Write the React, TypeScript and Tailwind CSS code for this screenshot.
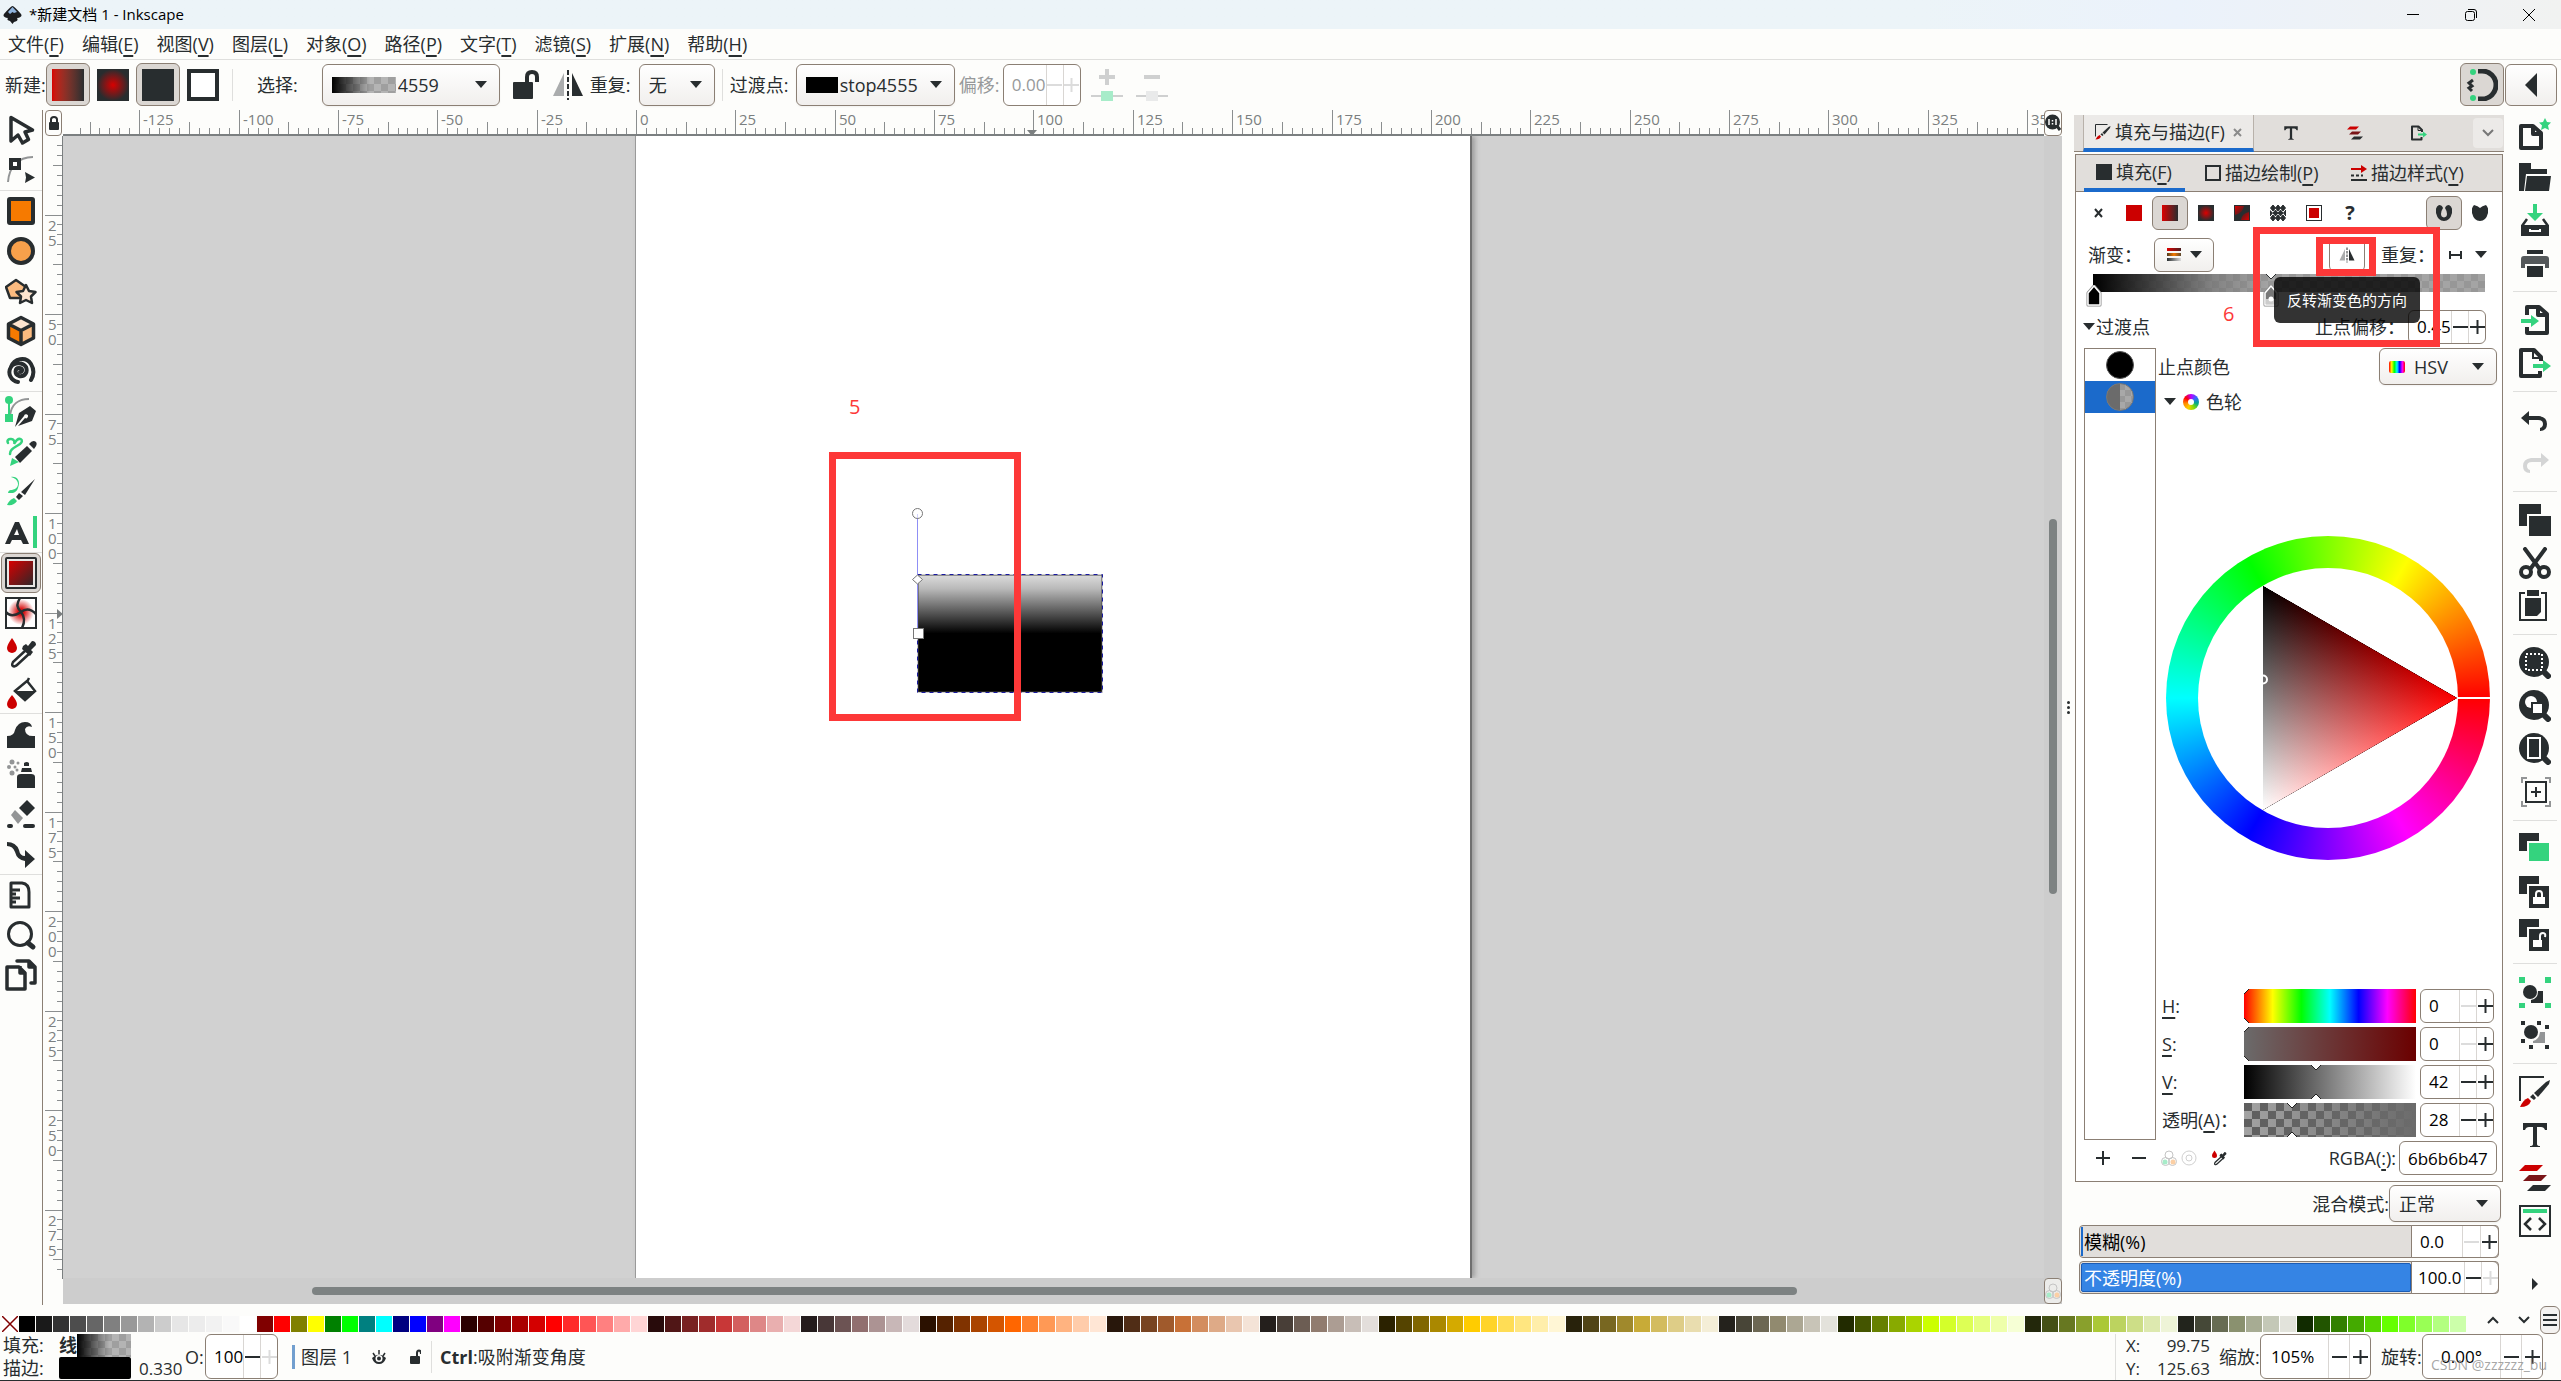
import type { ReactNode } from "react";

const INK = "#282d2f";
const GREEN = "#34d37e";
const RED = "#cc0000";

const PALETTE = (
  "000000 1a1a1a 333333 4d4d4d 666666 808080 999999 b3b3b3 cccccc e6e6e6 ececec f2f2f2 f9f9f9 ffffff " +
  "800000 ff0000 808000 ffff00 008000 00ff00 008080 00ffff 000080 0000ff 800080 ff00ff " +
  "2b0000 550000 800000 aa0000 d40000 ff0000 ff2a2a ff5555 ff8080 ffaaaa ffd5d5 " +
  "280b0b 501616 782121 a02c2c c83737 d35f5f de8787 e9afaf f4d7d7 " +
  "241c1c 483737 6c5353 916f6f ac9393 c8b7b7 e3dbdb " +
  "2b1100 552200 803300 aa4400 d45500 ff6600 ff7f2a ff9955 ffb380 ffccaa ffe6d5 " +
  "28170b 502d16 784421 a05a2c c87137 d38d5f deaa87 e9c6af f4e3d7 " +
  "241f1c 483e37 6c5d53 917c6f ac9d93 c8beb7 e3dedb " +
  "2b2200 554400 806600 aa8800 d4aa00 ffcc00 ffd42a ffdd55 ffe680 ffeeaa fff6d5 " +
  "28220b 504416 786721 a0892c c8ab37 d3bc5f decd87 e9ddaf f4eed7 " +
  "24221c 484537 6c6753 918a6f aca793 c8c4b7 e3e2db " +
  "222b00 445500 668000 88aa00 aad400 ccff00 d4ff2a ddff55 e5ff80 eeffaa f6ffd5 " +
  "23280b 445016 677821 89a02c abc837 bcd35f cdde87 dde9af eef4d7 " +
  "22241c 454837 676c53 8a916f a7ac93 c4c8b7 e2e3db " +
  "112b00 225500 338000 44aa00 55d400 66ff00 7fff2a 99ff55 b3ff80 ccffaa"
).split(" ");

const MENUS = [
  ["文件", "F"],
  ["编辑", "E"],
  ["视图", "V"],
  ["图层", "L"],
  ["对象", "O"],
  ["路径", "P"],
  ["文字", "T"],
  ["滤镜", "S"],
  ["扩展", "N"],
  ["帮助", "H"],
];

function Key({ children }: { children: string }) {
  return (
    <>
      (<span className="underline decoration-2 underline-offset-4">{children}</span>)
    </>
  );
}

function Svg({ size = 32, children }: { size?: number; children: ReactNode }) {
  return (
    <svg width={size} height={size} viewBox={`0 0 ${size} ${size}`} fill="none" className="shrink-0" aria-hidden="true">
      {children}
    </svg>
  );
}

function Arrow() {
  return (
    <svg width="12" height="8" viewBox="0 0 12 8" className="pointer-events-none shrink-0" aria-hidden="true">
      <path d="M0 0H12L6 7Z" fill={INK} />
    </svg>
  );
}

function Spin({ label, value, className, cell = "w-[17px]", noMinus, noPlus, disabled }: {
  label: string;
  value: string;
  className: string;
  cell?: string;
  noMinus?: boolean;
  noPlus?: boolean;
  disabled?: boolean;
}) {
  return (
    <div className={`flex shrink-0 overflow-hidden rounded-md border border-[#8b7f74] bg-white ${className}`}>
      <input
        aria-label={label}
        defaultValue={value}
        disabled={disabled}
        className={`w-0 min-w-0 flex-1 bg-transparent text-[17px] outline-none ${disabled ? "text-[#97999a]" : "text-black"}`}
      />
      <button aria-label={`${label} -`} className={`flex items-center justify-center border-l border-[#d9d6d3] ${cell}`}>
        <svg width="15" height="14"><path d="M0 7H15" stroke={noMinus || disabled ? "#dcdcdc" : INK} strokeWidth="2" /></svg>
      </button>
      <button aria-label={`${label} +`} className={`flex items-center justify-center border-l border-[#d9d6d3] ${cell}`}>
        <svg width="15" height="14"><path d="M0 7H15M7.500 0V14" stroke={noPlus || disabled ? "#dcdcdc" : INK} strokeWidth="2" /></svg>
      </button>
    </div>
  );
}

function Drop({ label, value, className, children }: { label: string; value: string; className: string; children?: ReactNode }) {
  return (
    <div className={`flex shrink-0 items-center rounded-md border border-[#8b7f74] bg-linear-to-b from-white to-[#f1efed] pr-3 pl-[9px] shadow-xs ${className}`}>
      {children}
      <select aria-label={label} className="min-w-0 flex-1 appearance-none bg-transparent outline-none">
        <option>{value}</option>
      </select>
      <Arrow />
    </div>
  );
}

/* ---------- icons ---------- */

function Flip({ size = 32 }: { size?: number }) {
  return (
    <svg width={size} height={size} viewBox="0 0 32 32" aria-hidden="true">
      <path d="M12 4V27H1Z" fill="#aaacad" />
      <path d="M20 4V27H31Z" fill={INK} />
      <path d="M16 1V31" stroke={INK} strokeWidth="2" strokeDasharray="5 2" />
    </svg>
  );
}

function PadLock({ open }: { open?: boolean }) {
  return (
    <svg width="12" height="16" viewBox="0 0 12 16" fill="none" aria-hidden="true">
      <rect x="1" y="7" width="10" height="8" rx="1" fill={INK} />
      <path d={open ? "M8 8V4Q8 1.500 10 1.500T12 5" : "M3 8V4.500Q3 2 6 2T9 4.500V8"} stroke={INK} strokeWidth="2" />
    </svg>
  );
}

function Dropper({ size = 32 }: { size?: number }) {
  return (
    <svg width={size} height={size} viewBox="0 0 32 32" fill="none" aria-hidden="true">
      <path d="M7 1Q12 8 12 11A5 5 0 0 1 2 11Q2 8 7 1Z" fill={RED} />
      <path d="M21 13L8 25Q6 29 9 29.500Q11 29 12 28L25 16" stroke={INK} strokeWidth="2.500" />
      <path d="M18 9L21 7L23 9L27 4Q31 4 31 8L26 13L28 15L25 19L17 12Z" fill={INK} />
    </svg>
  );
}

function Layers({ size = 32 }: { size?: number }) {
  return (
    <svg width={size} height={size} viewBox="0 0 32 32" aria-hidden="true">
      <path d="M6 3H24L18 9H0Z" fill={RED} />
      <path d="M10 13H28L22 19H4Z" fill="#7a1518" />
      <path d="M14 23H32L26 29H8Z" fill={INK} />
    </svg>
  );
}

function FillStroke({ size = 32 }: { size?: number }) {
  return (
    <svg width={size} height={size} viewBox="0 0 32 32" fill="none" aria-hidden="true">
      <path d="M1 25V1H25" stroke={INK} strokeWidth="2" />
      <path d="M31 4L30 8L19 21L15 17L27 6Z" fill={INK} />
      <path d="M14 18L17 22L15 24L11 21Z" fill={INK} />
      <path d="M9 22L12 25Q10 31 1 31Q4 24 9 22Z" fill={RED} />
    </svg>
  );
}

function Serif({ size = 32 }: { size?: number }) {
  return (
    <svg width={size} height={size} viewBox="0 0 32 32" aria-hidden="true">
      <path d="M4 4H28V11H26Q25 8 22 8H18V25Q18 27 21 27V28H11V27Q14 27 14 25V8H10Q7 8 6 11H4Z" fill={INK} />
    </svg>
  );
}

function Export({ size = 32 }: { size?: number }) {
  return (
    <svg width={size} height={size} viewBox="0 0 32 32" fill="none" aria-hidden="true">
      <path d="M21 24V29H2V3H15L22 10V14" stroke={INK} strokeWidth="4" strokeLinejoin="round" />
      <path d="M14 2V11H23" stroke={INK} strokeWidth="2" />
      <path d="M14 17H24V13L32 19L24 25V21H14Z" fill={GREEN} />
    </svg>
  );
}

const TOOLS: { name: string; sep?: boolean; active?: boolean; icon: ReactNode }[] = [
  { name: "选择", icon: <path d="M6 3.500L27.500 16L20 18L23.500 25.500L17.500 29L13 21L6 27Z" stroke={INK} strokeWidth="3.500" strokeLinejoin="round" /> },
  {
    name: "节点",
    icon: (
      <>
        <path d="M28 3C13 3 4 13 3 28" stroke="#939596" strokeWidth="2" />
        <rect x="6" y="6" width="8" height="8" stroke={INK} strokeWidth="4" fill="#fff" />
        <path d="M20 18L30 23.500L20 29L21 23.500Z" fill={INK} />
      </>
    ),
  },
  { name: "矩形", sep: true, icon: <rect x="4" y="4" width="24" height="24" rx="1" fill="#f67a00" stroke={INK} strokeWidth="4" /> },
  { name: "椭圆", icon: <circle cx="16" cy="16" r="12" fill="#f7a04b" stroke={INK} strokeWidth="4" /> },
  {
    name: "星形",
    icon: (
      <>
        <path d="M11 5L21 12L18 23H5L1 12Z" fill="#fbbb80" stroke={INK} strokeWidth="2.500" strokeLinejoin="round" />
        <path d="M21 10L24 16L30.500 17L26 21.500L27 28L21 25L15 28L16 21.500L11.500 17L18 16Z" fill="#fde4cf" stroke={INK} strokeWidth="2.500" strokeLinejoin="round" />
      </>
    ),
  },
  {
    name: "3D 盒子",
    icon: (
      <>
        <path d="M16 2L28 9L16 15L4 9Z" fill="#fde4cf" />
        <path d="M4 9L16 15V30L4 23Z" fill="#f67a00" />
        <path d="M28 9L16 15V30L28 23Z" fill="#fbbb80" />
        <path d="M16 2.500L28.500 9V23L16 29.500L3.500 23V9ZM3.500 9L16 15.500L28.500 9M16 15.500V29.500" stroke={INK} strokeWidth="3.500" strokeLinejoin="round" />
      </>
    ),
  },
  { name: "螺旋", icon: <path d="M15 17C18 17 18 13 14 13C10 13 9 19 14 21C20 22 23 17 21 12C18 7 9 7 6 12C2 18 6 26 13 27M6 12C9 3 21 1 26 9C29 14 29 20 26 25" stroke={INK} strokeWidth="4" strokeLinecap="round" /> },
  {
    name: "钢笔",
    sep: true,
    icon: (
      <>
        <path d="M5 20C6 8 14 3 24 3" stroke="#939596" strokeWidth="2" />
        <path d="M4 4V22" stroke={GREEN} strokeWidth="2" />
        <circle cx="4" cy="4" r="4" fill={GREEN} />
        <rect y="18" width="8" height="8" fill={GREEN} />
        <path d="M10 31L14 17L25 10L31 15L27 25L13 30L20 22A2 2 0 1 0 19 20Z" fill={INK} />
      </>
    ),
  },
  {
    name: "铅笔",
    icon: (
      <>
        <path d="M3 7C0 1 12 2 9 8C14 -1 20 4 15 8C9 12 5 13 5 18" stroke={GREEN} strokeWidth="2.500" strokeLinecap="round" />
        <path d="M7 22L14 26L5 30Z" fill={GREEN} />
        <path d="M10 21L22 10L27 15L15 27Z" fill={INK} />
        <path d="M24 8Q28 3 31 6Q33 9 29 13Z" fill={INK} />
      </>
    ),
  },
  {
    name: "书法笔",
    icon: (
      <>
        <path d="M6 1C14 3 15 10 10 13C5 15 4 13 3 17C6 17 11 18 13 12C16 5 12 0 6 1Z" fill={GREEN} />
        <path d="M9 22L12 25Q9 30 2 29Q4 24 9 22Z" fill={GREEN} />
        <path d="M30 3L20 19L16 16ZM14 17L18 20L14 24L11 21Z" fill={INK} />
      </>
    ),
  },
  {
    name: "文本",
    icon: (
      <>
        <path d="M10 6H14L24 28H18L16 24H7L5 28H0ZM9 19H14L12 13Z" fill={INK} fillRule="evenodd" />
        <path d="M30 0V32" stroke={GREEN} strokeWidth="4" />
      </>
    ),
  },
  {
    name: "渐变",
    sep: true,
    active: true,
    icon: (
      <>
        <linearGradient id="tool-grad" x2="1" y2="1"><stop stopColor="#d80000" /><stop offset=".85" stopColor="#4a2022" /><stop offset="1" stopColor={INK} /></linearGradient>
        <rect x="1" y="1" width="30" height="30" rx="1" stroke={INK} strokeWidth="2" fill="#e9e7e5" />
        <rect x="4" y="4" width="24" height="24" fill="url(#tool-grad)" />
      </>
    ),
  },
  {
    name: "网格",
    icon: (
      <>
        <radialGradient id="tool-mesh"><stop stopColor="#d00000" /><stop offset=".25" stopColor="#d81515" /><stop offset="1" stopColor="#fff" /></radialGradient>
        <rect x="1" y="1" width="30" height="30" fill="#fff" stroke={INK} strokeWidth="2" />
        <circle cx="16" cy="15" r="13" fill="url(#tool-mesh)" />
        <path d="M15 1C11 8 12 11 16 15C20 20 20 25 17 31M1 15C5 20 10 19 16 15C21 11 26 12 31 17" stroke={INK} strokeWidth="2.500" />
      </>
    ),
  },
  { name: "吸管", icon: <Dropper /> },
  {
    name: "油漆桶",
    icon: (
      <>
        <path d="M7 18Q12 24 12 27A5 5 0 0 1 2 27Q2 24 7 18Z" fill={RED} />
        <path d="M10 14L22 4L30 14L20 23ZM22 5L24 1" stroke={INK} strokeWidth="2.500" />
        <path d="M11 14H30L20 24Z" fill={INK} />
      </>
    ),
  },
  { name: "微调", sep: true, icon: <path d="M2 18Q9 18 10 12Q13 4 20 4Q26 4 27 9Q22 7 20 11Q20 19 30 18V30H2Z" fill={INK} /> },
  {
    name: "喷涂",
    icon: (
      <>
        <path d="M12 19Q12 16 16 16H26Q30 16 30 19V30H12ZM17 10H26L27 14H16ZM19 5Q22 3 24 5V8H19Z" fill={INK} />
        <g fill="#939596"><circle cx="7" cy="4" r="2.500" /><circle cx="4" cy="9" r="2" /><circle cx="7" cy="15" r="2.500" /><circle cx="13" cy="5" r="1.500" /><circle cx="10" cy="9" r="1.500" /><circle cx="12" cy="12" r="1.500" /></g>
      </>
    ),
  },
  {
    name: "橡皮擦",
    icon: (
      <>
        <path d="M22 2L30 10L22 18L14 10Z" fill={INK} />
        <path d="M10 12L18 20L13 26L6 17Z" fill="#939596" />
        <path d="M4 28H6M20 28H28" stroke={INK} strokeWidth="4" strokeLinecap="round" />
      </>
    ),
  },
  { name: "连接器", icon: <path d="M2 4Q11 4 14 12Q15 18 20 18V12L30 21L20 30V23Q12 22 10 14Q8 8 2 8Z" fill={INK} /> },
  { name: "测量", sep: true, icon: <path d="M6 4H17Q24 5 24 13V28H6ZM6 11H15M6 15H11M6 19H15M6 23H11" stroke={INK} strokeWidth="3" strokeLinejoin="round" /> },
  {
    name: "缩放",
    icon: (
      <>
        <circle cx="15" cy="15" r="11.500" stroke={INK} strokeWidth="3" />
        <path d="M23 24L28 28" stroke={INK} strokeWidth="5" strokeLinecap="round" />
      </>
    ),
  },
  {
    name: "页面",
    icon: (
      <>
        <path d="M2 8H14L20 14V30H2ZM15 7V14H21" stroke={INK} strokeWidth="3.500" strokeLinejoin="round" />
        <path d="M12 2H24L30 8V24H26M24 2V8H30" stroke={INK} strokeWidth="3.500" strokeLinejoin="round" strokeLinecap="round" />
      </>
    ),
  },
];

const BACK_SQUARES = <path d="M0 0H20V8H8V18H0Z" fill={INK} />;

function Lens({ children }: { children: ReactNode }) {
  return (
    <>
      <circle cx="15" cy="15" r="15" fill={INK} />
      <path d="M24 24L29 29" stroke={INK} strokeWidth="6" strokeLinecap="round" />
      {children}
    </>
  );
}

const COMMANDS: { name: string; icon: ReactNode }[][] = [
  [
    {
      name: "新建",
      icon: (
        <>
          <path d="M2 8H14L22 15V30H2ZM14 8V16H22" stroke={INK} strokeWidth="4" strokeLinejoin="round" />
          <path d="M26 0L28 4L32 4.500L29 7.500L30 12L26 10L22 12L23 7.500L20 4.500L24 4Z" fill={GREEN} />
        </>
      ),
    },
    { name: "打开", icon: <path d="M0 2H12V8H28V13H7L5 30H0ZM8 15H32L30 30H6Z" fill={INK} /> },
    {
      name: "保存",
      icon: (
        <>
          <path d="M14 0H18V9H24L16 17L8 9H14Z" fill={GREEN} />
          <path d="M2 21H30V32H2Z" fill={INK} />
          <path d="M3 22L8 15M29 22L24 15" stroke={INK} strokeWidth="2.500" />
          <path d="M11 25V27H21V25" stroke="#fff" strokeWidth="2" />
        </>
      ),
    },
    {
      name: "打印",
      icon: (
        <>
          <path d="M8 3H24V7H8ZM8 19H24V30H8Z" fill={INK} />
          <path d="M5 9H27Q30 9 30 12V21H26V17H6V21H2V12Q2 9 5 9Z" fill="#54585a" />
        </>
      ),
    },
  ],
  [
    {
      name: "导入",
      icon: (
        <>
          <path d="M8 11V3H20L28 10V29H8V23M19 3V11H28" stroke={INK} strokeWidth="4" strokeLinejoin="round" />
          <path d="M2 15H12V11L20 17L12 23V19H2Z" fill={GREEN} />
        </>
      ),
    },
    { name: "导出", icon: <Export /> },
  ],
  [
    { name: "撤销", icon: <path d="M2 14L10 7V12H20Q28 13 28 20Q28 27 21 27V24Q24 23 24 20Q24 16 19 16H10V21Z" fill={INK} /> },
    { name: "重做", icon: <path d="M30 13L22 6V11H12Q4 12 4 19Q4 26 11 26V23Q8 22 8 19Q8 15 13 15H22V20Z" fill="#d4d5d5" /> },
  ],
  [
    { name: "复制", icon: <path d="M0 0H22V10H8V22H0ZM10 12H32V32H10Z" fill={INK} /> },
    {
      name: "剪切",
      icon: (
        <>
          <path d="M6 2L20 21M26 2L12 21" stroke={INK} strokeWidth="4" strokeLinecap="round" />
          <circle cx="7" cy="25" r="5" stroke={INK} strokeWidth="4" />
          <circle cx="25" cy="25" r="5" stroke={INK} strokeWidth="4" />
        </>
      ),
    },
    {
      name: "粘贴",
      icon: (
        <>
          <path d="M6 3H1V30H27V3H22" stroke={INK} strokeWidth="2" />
          <path d="M8 0H20V6H8ZM6 8H22V22L18 26H6Z" fill={INK} />
        </>
      ),
    },
  ],
  [
    { name: "缩放选区", icon: <Lens><rect x="7" y="7" width="16" height="16" stroke="#fff" strokeWidth="2" strokeDasharray="2 2" /></Lens> },
    { name: "缩放绘图", icon: <Lens><circle cx="12" cy="12" r="6" fill="#fff" /><rect x="13" y="13" width="11" height="11" fill="#fff" stroke={INK} strokeWidth="2" /></Lens> },
    { name: "缩放页面", icon: <Lens><rect x="9" y="5" width="12" height="20" stroke="#fff" strokeWidth="2" /></Lens> },
    {
      name: "居中页面",
      icon: (
        <>
          <path d="M3 7V2H8M26 2H31V7M31 25V30H26M8 30H3V25" stroke="#939596" strokeWidth="2" />
          <path d="M7 6H27V26H7ZM12 16H22M17 11V21" stroke={INK} strokeWidth="2" />
        </>
      ),
    },
  ],
  [
    { name: "再制", icon: <>{BACK_SQUARES}<path d="M10 10H30V28H10Z" fill={GREEN} /></> },
    {
      name: "克隆",
      icon: (
        <>
          {BACK_SQUARES}
          <path d="M10 10H30V32H10Z" fill={INK} />
          <path d="M14 21H26V28H14Z" fill="#fff" />
          <path d="M17 22V18Q17 15 20 15T23 18V22" stroke="#fff" strokeWidth="2" />
        </>
      ),
    },
    {
      name: "取消克隆",
      icon: (
        <>
          {BACK_SQUARES}
          <path d="M10 10H30V32H10Z" fill={INK} />
          <path d="M14 21H23V28H14Z" fill="#fff" />
          <path d="M21 22V17Q21 14 24 14T26 18" stroke="#fff" strokeWidth="2" />
        </>
      ),
    },
  ],
  [
    {
      name: "群组",
      icon: (
        <>
          <path d="M0 1H6V7H0ZM26 1H32V7H26ZM0 27H6V32H0ZM26 27H32V32H26Z" fill={GREEN} />
          <circle cx="11" cy="16" r="7" fill={INK} />
          <path d="M19 15H24V27H12V24Q19 23 19 15Z" fill={INK} />
        </>
      ),
    },
    {
      name: "取消群组",
      icon: (
        <>
          <path d="M2 2H6V6H2ZM18 2H22V6H18ZM26 6H30V10H26ZM2 20H6V24H2ZM10 26H14V30H10ZM26 26H30V30H26Z" fill={INK} />
          <path d="M21 13H26V24H14V22Q20 21 21 13Z" fill="#939596" />
          <circle cx="12" cy="13" r="7" fill={INK} />
        </>
      ),
    },
  ],
  [
    { name: "填充与描边", icon: <FillStroke /> },
    { name: "文字", icon: <Serif /> },
    { name: "图层", icon: <Layers /> },
    {
      name: "XML 编辑器",
      icon: (
        <>
          <rect x="1" y="1" width="30" height="30" stroke={INK} strokeWidth="2" />
          <path d="M4 6H28" stroke={GREEN} strokeWidth="4" />
          <path d="M12 13L6 19L12 25M20 13L26 19L20 25" stroke={INK} strokeWidth="2.500" />
        </>
      ),
    },
  ],
];

/* ---------- rulers and canvas ---------- */

const STEP = 99.36;

function HRuler() {
  const ticks = [];
  for (let i = -56; i <= 144; i++) {
    const x = Math.round(573 + (i * STEP) / 10);
    const top = i % 10 === 0 ? 0 : i % 5 === 0 ? 12 : 18;
    ticks.push(<path key={i} d={`M${x}.5 ${top}V26`} stroke="#8b8e8f" />);
    if (i % 10 === 0) {
      ticks.push(
        <text key={`t${i}`} x={x + 4} y="15" fontSize="15" fill="#7b7f80">{(i / 10) * 25}</text>
      );
    }
  }
  return (
    <svg className="h-[26px] w-0 min-w-0 flex-1 border-b-2 border-[#7b7f80]" aria-hidden="true">
      {ticks}
      <path d="M964 20H974L969 26Z" fill="#7b7f80" />
    </svg>
  );
}

function VRuler() {
  const ticks = [];
  for (let i = -1; i <= 116; i++) {
    const y = Math.round((i * 99.5) / 10 - 21);
    const left = i % 10 === 0 ? 2 : i % 5 === 0 ? 10 : 14;
    ticks.push(<path key={i} d={`M${left} ${y}.5H20`} stroke="#8b8e8f" />);
    if (i > 0 && i % 10 === 0) {
      String((i / 10) * 25).split("").forEach((digit, n) =>
        ticks.push(
          <text key={`${i}-${n}`} x="5" y={y + 16 + n * 15} fontSize="15" fill="#7b7f80">{digit}</text>
        )
      );
    }
  }
  return (
    <svg className="mb-[26px] w-5 shrink-0 border-r border-[#7b7f80]" aria-hidden="true">
      {ticks}
      <path d="M14 473V483L20 478Z" fill="#7b7f80" />
    </svg>
  );
}

function Canvas() {
  return (
    <div className="relative min-w-0 flex-1 overflow-hidden bg-[#d1d1d1]">
      <div className="absolute inset-y-0 left-[572px] w-[837px] border-r-2 border-l border-[#6f6f6f] border-l-[#9a9a9a] bg-white shadow-[3px_0_5px_#9c9c9c]" />
      <svg className="absolute inset-0 h-full w-full" aria-hidden="true">
        <linearGradient id="object" x2="0" y2="1">
          <stop stopColor="#dcdcdc" />
          <stop offset=".12" stopColor="#b8b8b8" />
          <stop offset=".5" stopColor="#000" />
        </linearGradient>
        <rect x="855" y="439" width="184" height="117" fill="url(#object)" stroke="#444" />
        <rect x="854.500" y="438.500" width="185" height="118" fill="none" stroke="#ccc" />
        <rect x="854.500" y="438.500" width="185" height="118" fill="none" stroke="#1a1aa0" strokeDasharray="4 4" />
        <path d="M854.500 378V500" stroke="#8f8ff5" />
        <circle cx="854.500" cy="377.500" r="5" fill="#fff" fillOpacity=".6" stroke="#777" />
        <path d="M849.500 443.500L854.500 439L859.500 443.500L854.500 448Z" fill="#fff" stroke="#777" />
        <rect x="850.500" y="492.500" width="10" height="10" fill="#fff" stroke="#777" />
      </svg>
      <span className="absolute top-[257px] left-[786px] text-xl text-[#fd3838]">5</span>
      <div className="absolute top-[316px] left-[766px] h-[269px] w-[192px] border-7 border-[#fd3838]" />
    </div>
  );
}

/* ---------- fill & stroke panel ---------- */

const SLIDERS = [
  { label: "H", value: "0", pos: 0, noMinus: true, bg: "bg-[linear-gradient(to_right,#f00,#ff0,#0f0,#0ff,#00f,#f0f,#f00)]" },
  { label: "S", value: "0", pos: 0, noMinus: true, bg: "bg-[linear-gradient(to_right,#6b6b6b,#6b0000)]" },
  { label: "V", value: "42", pos: 42, noMinus: false, bg: "bg-[linear-gradient(to_right,#000,#fff)]" },
  {
    label: "A",
    value: "28",
    pos: 28,
    noMinus: false,
    bg: "bg-[linear-gradient(to_right,#6b6b6b00,#6b6b6b),repeating-conic-gradient(#a3a3a3_0_25%,#5f5f5f_0_50%)] bg-[length:100%_100%,16px_16px]",
  },
];

function ColorWheel() {
  return (
    <div className="flex size-[324px] items-center justify-center rounded-full bg-[conic-gradient(from_90deg,#f00,#f0f,#00f,#0ff,#0f0,#ff0,#f00)]">
      <div className="relative size-[260px] rounded-full bg-white">
        <svg width="324" height="324" className="absolute -top-8 -left-8 isolate" aria-hidden="true">
          <linearGradient id="tri-hue" gradientUnits="userSpaceOnUse" x1="97" y1="0" x2="291" y2="0">
            <stop stopColor="#000" />
            <stop offset="1" stopColor="#f00" />
          </linearGradient>
          <linearGradient id="tri-white" gradientUnits="userSpaceOnUse" x1="194" y1="106" x2="97" y2="274">
            <stop stopColor="#000" />
            <stop offset="1" stopColor="#fff" />
          </linearGradient>
          <path d="M97 50L291 162L97 274Z" fill="url(#tri-hue)" />
          <path d="M97 50L291 162L97 274Z" fill="url(#tri-white)" className="mix-blend-plus-lighter" />
          <path d="M97 139.500A4 4 0 1 1 97 147.500" fill="none" stroke="#fff" strokeWidth="2" />
          <path d="M291 162H324" stroke="#fff" strokeWidth="2" />
        </svg>
      </div>
    </div>
  );
}

function StopHandle({ fill, dot }: { fill: string; dot?: boolean }) {
  return (
    <svg width="16" height="22" viewBox="0 0 16 22" aria-hidden="true">
      <path d="M8 1L14 8V20H2V8Z" fill={fill} stroke="#8a8a8a" strokeWidth="3" strokeLinejoin="round" />
      <path d="M8 1L14 8V20H2V8Z" fill={fill} stroke="#fff" strokeWidth="1.500" strokeLinejoin="round" />
      {dot && <path d="M3 14H13V19H3Z" fill="#ccc" />}
      {dot && <circle cx="8" cy="14" r="2.500" fill="#fff" />}
    </svg>
  );
}

const PAINTS: { name: string; active?: boolean; icon: ReactNode }[] = [
  { name: "无", icon: <path d="M5 4L12 12M12 4L5 12" stroke={INK} strokeWidth="2" /> },
  { name: "单色", icon: <rect width="16" height="16" fill={RED} /> },
  {
    name: "线性渐变",
    active: true,
    icon: (
      <>
        <linearGradient id="p-lin"><stop stopColor="#d00" /><stop offset="1" stopColor={INK} /></linearGradient>
        <rect width="16" height="16" fill="url(#p-lin)" />
      </>
    ),
  },
  {
    name: "径向渐变",
    icon: (
      <>
        <radialGradient id="p-rad"><stop stopColor="#d00" /><stop offset="1" stopColor={INK} /></radialGradient>
        <rect width="16" height="16" fill="url(#p-rad)" />
      </>
    ),
  },
  {
    name: "网格渐变",
    icon: (
      <>
        <linearGradient id="p-mesh" x2="1" y2="1"><stop stopColor="#d00" /><stop offset=".45" stopColor="#5b1a1c" /><stop offset=".55" stopColor="#5b1a1c" /><stop offset="1" stopColor="#d00" /></linearGradient>
        <rect width="16" height="16" fill={INK} />
        <path d="M1 1H10Q9 8 1 10ZM15 15V7Q8 8 7 15Z" fill="url(#p-mesh)" />
      </>
    ),
  },
  {
    name: "图案",
    icon: (
      <path
        d="M3 0L5.500 3L3 6L0.500 3ZM8 0L10.500 3L8 6L5.500 3ZM13 0L15.500 3L13 6L10.500 3ZM0 5.500L2.500 8L0 11ZM5.500 5L8 8L5.500 11L3 8ZM10.500 5L13 8L10.500 11L8 8ZM16 5L13.500 8L16 11ZM3 10L5.500 13L3 16L0.500 13ZM8 10L10.500 13L8 16L5.500 13ZM13 10L15.500 13L13 16L10.500 13Z"
        fill={INK}
        stroke={INK}
      />
    ),
  },
  { name: "色板", icon: <><rect x=".5" y=".5" width="15" height="15" fill="#fff" stroke={INK} /><rect x="3" y="3" width="10" height="10" fill={RED} /></> },
];

function StopsAndRepeat() {
  return (
    <>
      <div className="mt-2 flex h-[34px] items-center pl-3">
        <span className="w-[66px]">渐变：</span>
        <button aria-label="渐变" className="flex h-[34px] w-[60px] items-center justify-around rounded-md border border-[#8b7f74] bg-linear-to-b from-white to-[#f1efed] px-2">
          <Svg size={16}>
            <linearGradient id="g-list1"><stop stopColor="#d00" /><stop offset="1" stopColor="#4b2022" /></linearGradient>
            <linearGradient id="g-list2"><stop stopColor="#4b3a22" /><stop offset=".5" stopColor="#f67a00" /><stop offset="1" stopColor="#5b4a32" /></linearGradient>
            <linearGradient id="g-list3"><stop stopColor={INK} /><stop offset="1" stopColor="#ddd" /></linearGradient>
            <rect y="1" width="14" height="3" fill="url(#g-list1)" />
            <rect y="6" width="14" height="3" fill="url(#g-list2)" />
            <rect y="11" width="14" height="3" fill="url(#g-list3)" />
          </Svg>
          <Arrow />
        </button>
        <div className="relative ml-[115px] flex">
          <button aria-label="反转渐变色的方向" className="flex h-[34px] w-9 items-center justify-center rounded-md border border-[#8b7f74] bg-white">
            <Flip size={16} />
          </button>
          <div className="absolute -top-[11px] -left-[76px] z-20 h-[120px] w-[187px] border-7 border-[#fd3838]" />
          <div className="absolute -top-px -left-[13px] z-20 h-[39px] w-[60px] border-7 border-[#fd3838]" />
          <div role="tooltip" className="absolute top-[39px] -left-[55px] z-10 flex h-[46px] w-[146px] items-center justify-center rounded-md bg-black/80 text-[15px] whitespace-nowrap text-white">
            反转渐变色的方向
          </div>
          <span className="absolute top-[62px] -left-[106px] text-xl text-[#fd3838]">6</span>
        </div>
        <span className="ml-4 w-[68px]">重复：</span>
        <button aria-label="重复" className="flex items-center gap-3">
          <svg width="14" height="10"><path d="M1 1V9M12 1V9M1 5H12" stroke={INK} strokeWidth="2" /></svg>
          <Arrow />
        </button>
      </div>
      <div className="relative mx-[17px] mt-[2px] h-9">
        <div className="h-[18px] bg-[linear-gradient(to_right,#000,#6b6b6bb8_30%,#6b6b6b47_45%,#6b6b6b47),repeating-conic-gradient(#bababa_0_25%,#a8a8a8_0_50%)] bg-[length:100%_100%,14px_14px]" />
        <div className="absolute top-[11px] -left-[7px]"><StopHandle fill="#000" /></div>
        <div className="absolute top-[11px] left-[170px]"><StopHandle fill="#777" dot /></div>
        <svg width="10" height="6" className="absolute top-0 left-[173px]"><path d="M0 0L5 5L10 0" fill="#fff" stroke={INK} /></svg>
      </div>
      <div className="flex h-[34px] items-center pr-4 pl-[7px]">
        <button className="flex flex-1 items-center gap-px"><Arrow />过渡点</button>
        <span className="mr-[3px]">止点偏移：</span>
        <Spin label="止点偏移" value="0.45" className="h-[34px] w-[78px] pl-2" />
      </div>
    </>
  );
}

function FillPanel() {
  return (
    <aside className="flex w-[430px] shrink-0 flex-col pt-[5px] pb-[11px]">
      <div className="flex h-[37px] shrink-0 items-center border-b border-[#8b7f74] bg-[#e1dedb] pl-[9px]" role="tablist">
        <button role="tab" className="flex h-[37px] w-[171px] items-center gap-1 border-x border-b-4 border-x-[#b8b1aa] border-b-[#1b6acb] bg-[#eceae8] pt-[2px] pl-[11px] whitespace-nowrap">
          <FillStroke size={16} />
          填充与描边(F)
          <Svg size={16}><path d="M5 5L12 12M12 5L5 12" stroke="#8b8b8b" strokeWidth="2" /></Svg>
        </button>
        <button role="tab" aria-label="文字" className="flex w-[73px] justify-center"><Serif size={18} /></button>
        <button role="tab" aria-label="图层" className="flex w-14 justify-center"><Layers size={16} /></button>
        <button role="tab" aria-label="导出" className="flex w-[71px] justify-center"><Export size={16} /></button>
        <button aria-label="更多" className="mr-px ml-auto flex h-[30px] w-[30px] items-center justify-center rounded bg-[#eceae8]">
          <svg width="12" height="8" fill="none"><path d="M1 1L6 6L11 1" stroke="#777" strokeWidth="2" /></svg>
        </button>
      </div>
      <div className="mt-[2px] ml-px flex min-h-0 w-[428px] flex-1 flex-col border border-[#8b7f74] bg-white">
        <div className="flex h-[37px] shrink-0 items-center border-b border-[#8b7f74] bg-[#e1dedb] pl-2" role="tablist">
          <button role="tab" className="flex h-[37px] w-[101px] items-center gap-1 border-b-4 border-[#1b6acb] pt-[2px] pl-3 whitespace-nowrap">
            <Svg size={16}><rect width="16" height="16" fill={INK} /></Svg>
            <span>填充<Key>F</Key></span>
          </button>
          <button role="tab" className="ml-5 flex w-[146px] items-center gap-1 whitespace-nowrap">
            <Svg size={16}><rect x="1" y="1" width="14" height="14" stroke={INK} strokeWidth="2" /></Svg>
            <span>描边绘制<Key>P</Key></span>
          </button>
          <button role="tab" className="flex items-center gap-1 whitespace-nowrap">
            <Svg size={16}>
              <path d="M0 3H10V0L16 4L10 8V5H0Z" fill={RED} />
              <path d="M0 10.500H3M5 10.500H8M10 10.500H12M0 15H16" stroke={INK} strokeWidth="2" />
            </Svg>
            <span>描边样式<Key>Y</Key></span>
          </button>
        </div>
        <div className="mt-1 flex h-[34px] shrink-0 items-center pr-1 pl-1">
          {PAINTS.map((paint) => (
            <button
              key={paint.name}
              aria-label={paint.name}
              className={`flex h-[34px] w-9 items-center justify-center rounded-md border ${paint.active ? "border-[#8b7f74] bg-[#dbd7d3]" : "border-transparent"}`}
            >
              <Svg size={16}>{paint.icon}</Svg>
            </button>
          ))}
          <button className="w-9 text-xl font-bold">?</button>
          <button aria-label="奇偶" className="ml-auto flex h-[34px] w-9 items-center justify-center rounded-md border border-[#8b7f74] bg-[#dbd7d3]">
            <Svg size={16}><path d="M3 0Q6 0 7 3Q5 6 5 9Q5 12 8 12.500Q11 12 11 9Q11 6 9 3Q10 0 13 0Q17 2 16 8Q14 16 8 16T0 8Q-1 2 3 0Z" fill={INK} /></Svg>
          </button>
          <button aria-label="非零" className="flex h-[34px] w-9 items-center justify-center">
            <Svg size={16}><path d="M2 0Q6 1 8 3Q10 1 14 0Q17 3 16 8Q14 16 8 16T0 8Q-1 3 2 0Z" fill={INK} /></Svg>
          </button>
        </div>
        <StopsAndRepeat />
        <div className="mt-1 flex min-h-0 flex-1 pr-[5px] pl-2">
          <div className="w-[72px] shrink-0 border border-[#8b7f74]">
            <button aria-label="止点 1" className="flex h-8 w-full items-center justify-center"><span className="size-7 rounded-full border border-[#555] bg-black" /></button>
            <button aria-label="止点 2" className="flex h-8 w-full items-center justify-center bg-[#1b6acb]">
              <span className="size-7 rounded-full border border-[#777] bg-[linear-gradient(to_right,#6b6b6b_50%,transparent_50%),repeating-conic-gradient(#a8a8a8_0_25%,#989898_0_50%)] bg-[length:100%_100%,12px_12px]" />
            </button>
          </div>
          <div className="flex min-w-0 flex-1 flex-col pb-[3px] pl-[2px]">
            <div className="flex items-center justify-between">
              <span>止点颜色</span>
              <Drop label="颜色模式" value="HSV" className="h-[37px] w-[118px] pl-3">
                <span className="mr-[9px] h-3 w-4 rounded-xs bg-[linear-gradient(to_right,#f00,#ff0,#0f0,#0ff,#00f,#f0f,#f00)]" />
              </Drop>
            </div>
            <button className="flex h-[34px] items-center gap-[7px] pl-[6px]">
              <Arrow />
              <span className="flex size-4 items-center justify-center rounded-full bg-[conic-gradient(#b0f,#36f,#0a8,#8d0,#fc0,#f80,#f00,#b0f)]"><span className="size-[6px] rounded-full bg-white" /></span>
              色轮
            </button>
            <div className="flex min-h-0 flex-1 items-center justify-center pb-3">
              <ColorWheel />
            </div>
            <div className="flex flex-col gap-1 pr-[2px] pl-1">
              {SLIDERS.map((s) => (
                <div key={s.label} className="flex h-[34px] items-center">
                  <label htmlFor={`slider-${s.label}`} className="w-[82px] whitespace-nowrap">
                    {s.label === "A" ? (
                      <>透明<Key>A</Key>：</>
                    ) : (
                      <><span className="underline decoration-2 underline-offset-4">{s.label}</span>:</>
                    )}
                  </label>
                  <div className="relative h-[34px] w-[172px] overflow-hidden">
                    <input
                      id={`slider-${s.label}`}
                      type="range"
                      defaultValue={s.pos}
                      className={`block h-full w-full appearance-none [&::-webkit-slider-thumb]:opacity-0 ${s.bg}`}
                    />
                    <svg width="12" height="34" className="pointer-events-none absolute top-0 -translate-x-1/2" style={{ left: `${s.pos}%` }}>
                      <path d="M0 -1L6 5L12 -1M0 35L6 29L12 35" fill="#fff" stroke="#222" />
                    </svg>
                  </div>
                  <Spin label={s.label} value={s.value} noMinus={s.noMinus} className="ml-1 h-[34px] w-[74px] pl-2" />
                </div>
              ))}
            </div>
          </div>
        </div>
        <div className="mb-[5px] flex h-9 shrink-0 items-center pr-[5px] pl-5">
          <button aria-label="添加止点"><Svg size={14}><path d="M0 7H14M7 0V14" stroke={INK} strokeWidth="2" /></Svg></button>
          <button aria-label="删除止点" className="ml-[22px]"><Svg size={14}><path d="M0 7H14" stroke={INK} strokeWidth="2" /></Svg></button>
          <button aria-label="色彩管理" className="ml-[15px]"><Circles /></button>
          <button aria-label="超出色域" className="ml-1">
            <Svg size={16}><circle cx="8" cy="8" r="7" stroke="#d0d0d0" /><circle cx="8" cy="8" r="3" stroke="#d0d0d0" /></Svg>
          </button>
          <button aria-label="拾取颜色" className="ml-[14px]"><Dropper size={16} /></button>
          <label htmlFor="rgba" className="mr-[3px] ml-auto">RGBA<Key>:</Key>:</label>
          <input id="rgba" defaultValue="6b6b6b47" className="h-[34px] w-[98px] rounded-md border border-[#8b7f74] px-2 text-[17px] text-black outline-none" />
        </div>
      </div>
      <div className="mt-[3px] flex shrink-0 items-center justify-end pr-[3px]">
        <span>混合模式:</span>
        <Drop label="混合模式" value="正常" className="h-[37px] w-[112px]" />
      </div>
      <div className="mt-[3px] flex shrink-0 flex-col gap-[3px] pr-[5px] pl-[5px]">
        <div className="flex h-[33px] rounded border border-[#8b7f74] bg-[#e1dedb]">
          <label className="m-px flex flex-1 items-center border-l-2 border-[#1b6acb] pl-px text-black">模糊(%)</label>
          <Spin label="模糊(%)" value="0.0" noMinus cell="w-[18px]" className="-m-px w-[88px] rounded-l-none pl-2" />
        </div>
        <div className="flex h-[33px] rounded border border-[#8b7f74] bg-[#e1dedb]">
          <label className="m-px flex flex-1 items-center rounded-xs border border-[#1b5cb5] bg-[#3584e4] pl-[2px] text-white">不透明度(%)</label>
          <Spin label="不透明度(%)" value="100.0" noPlus cell="w-[17px]" className="-m-px w-[88px] rounded-l-none pl-[6px]" />
        </div>
      </div>
    </aside>
  );
}

function Circles() {
  return (
    <Svg size={16}>
      <circle cx="8" cy="5" r="4" stroke="#c4c4c4" />
      <circle cx="4.500" cy="11.500" r="4" stroke="#c4c4c4" />
      <circle cx="11.500" cy="11.500" r="4" stroke="#c4c4c4" />
      <circle cx="4" cy="12" r="2.500" fill="#a7ecc9" />
      <circle cx="12" cy="12" r="2.500" fill="#fbcfa4" />
    </Svg>
  );
}

/* ---------- bars ---------- */

function TitleBar() {
  return (
    <header className="flex h-[29px] shrink-0 items-center bg-linear-to-r from-[#ecf4f8] from-75% via-[#ebf2fb] via-85% to-[#f1f2f1] pr-[3px] pl-[3px] text-[15px] text-black">
      <svg width="19" height="20" viewBox="0 0 19 20" aria-hidden="true">
        <path d="M9.500 1Q11 1 18 9Q20 12 14 13Q16 16 11 17L9.500 19L7 16Q3 15 5 13Q-1 12 1 9Q8 1 9.500 1Z" fill="#1b1d20" />
        <path d="M9.500 2L14 7L11 8L9.500 7L7 9L5 7Z" fill="#8fb4de" />
      </svg>
      <span className="ml-[7px] flex-1 pb-[2px]">*新建文档 1 - Inkscape</span>
      <button aria-label="最小化" className="flex w-[58px] justify-center"><Svg size={14}><path d="M1 6.500H13" stroke="#000" /></Svg></button>
      <button aria-label="还原" className="flex w-[58px] justify-center">
        <Svg size={14}><rect x="1.500" y="3.500" width="9" height="9" rx="2" stroke="#000" /><path d="M4 1.500H10Q12.500 1.500 12.500 4V10" stroke="#000" /></Svg>
      </button>
      <button aria-label="关闭" className="flex w-[58px] justify-center"><Svg size={14}><path d="M1 1L13 13M13 1L1 13" stroke="#000" /></Svg></button>
    </header>
  );
}

function GradientToolbar() {
  const toggle = "flex h-[43px] w-[44px] shrink-0 items-center justify-center rounded-md border mr-px";
  return (
    <div className="flex h-[50px] shrink-0 items-center pr-1 pb-px pl-[5px] whitespace-nowrap">
      <span className="w-[41px]">新建:</span>
      <button aria-label="线性渐变" className={`${toggle} border-[#8b7f74] bg-[#dbd7d3]`}>
        <span className="size-8 bg-linear-to-r from-[#d80000] to-[#282d2f]" />
      </button>
      <button aria-label="径向渐变" className={`${toggle} border-transparent`}>
        <span className="size-8 bg-[radial-gradient(circle,#d80000,#282d2f_70%)]" />
      </button>
      <button aria-label="填充" className={`${toggle} border-[#8b7f74] bg-[#dbd7d3]`}>
        <span className="size-8 bg-[#282d2f]" />
      </button>
      <button aria-label="描边" className={`${toggle} border-transparent`}>
        <span className="size-8 border-4 border-[#282d2f] bg-white" />
      </button>
      <span className="mr-6 ml-[6px] h-8 w-px bg-[#dfdfdd]" />
      <span className="mr-6">选择:</span>
      <Drop label="选择" value="4559" className="h-[42px] w-[178px]">
        <span className="mr-[2px] h-4 w-16 bg-[linear-gradient(to_right,#000,#0000_60%),repeating-conic-gradient(#b4b4b4_0_25%,#9f9f9f_0_50%)] bg-[length:100%_100%,14px_14px]" />
      </Drop>
      <button aria-label="锁定" className="ml-[10px]">
        <Svg>
          <rect x="3" y="13" width="20" height="17" rx="1" fill={INK} />
          <path d="M17 15V8Q17 3 22 3T27 8V13" stroke={INK} strokeWidth="4" />
        </Svg>
      </button>
      <button aria-label="反转" className="ml-[10px]"><Flip /></button>
      <span className="ml-[6px] w-[49px]">重复:</span>
      <Drop label="重复" value="无" className="h-[42px] w-[76px]" />
      <span className="mr-[7px] ml-[7px] h-8 w-px bg-[#dfdfdd]" />
      <span className="w-[66px]">过渡点:</span>
      <Drop label="过渡点" value="stop4555" className="h-[42px] w-[159px]">
        <span className="mr-[2px] h-4 w-8 bg-black" />
      </Drop>
      <span className="ml-1 w-[44px] text-[#97999a]">偏移:</span>
      <Spin label="偏移" value="0.00" disabled className="h-[42px] w-[78px] pl-2" />
      <button aria-label="插入止点" className="ml-[10px]">
        <Svg><path d="M8 8H24M16 0V16" stroke="#cfd0d0" strokeWidth="4" /><path d="M0 27H32" stroke="#cfd0d0" strokeWidth="2" /><rect x="10" y="22" width="12" height="10" fill="#a7ecc9" /></Svg>
      </button>
      <button aria-label="删除止点" className="ml-[13px]">
        <Svg><path d="M8 8H24" stroke="#cfd0d0" strokeWidth="4" /><path d="M0 27H32" stroke="#cfd0d0" strokeWidth="2" /><rect x="10" y="22" width="12" height="10" fill="#e9eaea" /></Svg>
      </button>
      <button aria-label="吸附" className={`${toggle} ml-auto border-[#8b7f74] bg-[#dbd7d3]`}>
        <Svg>
          <path d="M12 2H16A14 14 0 0 1 16 30H12" stroke={INK} strokeWidth="5" />
          <circle cx="7" cy="3" r="3" fill={GREEN} />
          <circle cx="7" cy="29" r="3" fill={GREEN} />
          <path d="M7 11L3 14L6 17L3 19L6 22" stroke={INK} strokeWidth="3" />
        </Svg>
      </button>
      <button aria-label="吸附选项" className="flex h-[42px] w-[52px] shrink-0 items-center justify-center rounded-md border border-[#8b7f74] bg-linear-to-b from-white to-[#f1efed]">
        <svg width="12" height="24"><path d="M12 0V24L0 12Z" fill={INK} /></svg>
      </button>
    </div>
  );
}

function PaletteBar() {
  return (
    <div className="flex h-[29px] shrink-0 items-center pl-[2px]">
      <div className="flex min-w-0 flex-1 gap-px overflow-hidden pt-[11px] pb-[2px]">
        <button aria-label="无颜色" className="shrink-0">
          <svg width="16" height="16" className="block bg-white"><path d="M0 0L16 16M16 0L0 16" stroke="#800000" strokeWidth="1.500" /></svg>
        </button>
        {PALETTE.map((color, i) => (
          <button key={i} aria-label={`#${color}`} className="size-4 shrink-0" style={{ backgroundColor: `#${color}` }} />
        ))}
      </div>
      <button aria-label="上一行" className="mr-[19px]"><svg width="12" height="12" fill="none"><path d="M1 9L6 4L11 9" stroke={INK} strokeWidth="2" /></svg></button>
      <button aria-label="下一行" className="mr-[10px]"><svg width="12" height="12" fill="none"><path d="M1 3L6 8L11 3" stroke={INK} strokeWidth="2" /></svg></button>
      <button aria-label="色板菜单" className="mr-px flex h-7 w-5 items-center justify-center rounded-md border border-[#8b7f74] bg-[#f4f2f0]">
        <svg width="14" height="14"><path d="M0 2H14M0 7H14M0 12H14" stroke={INK} strokeWidth="2" /></svg>
      </button>
    </div>
  );
}

function StatusBar() {
  return (
    <footer className="relative flex h-[47px] shrink-0 items-center border-b border-[#282d2f] pr-[18px] pb-px pl-[3px] whitespace-nowrap">
      <div className="w-14 leading-[23px]">
        <div>填充:</div>
        <div>描边:</div>
      </div>
      <div className="w-[72px] leading-[23px]">
        <div className="flex h-[23px] font-bold">
          线
          <span className="flex-1 bg-[linear-gradient(to_right,#000,#0000_60%),repeating-conic-gradient(#b4b4b4_0_25%,#9f9f9f_0_50%)] bg-[length:100%_100%,14px_14px]" />
        </div>
        <div className="h-[22px] rounded-xs bg-black" />
      </div>
      <span className="mt-6 ml-2 w-[46px] text-[17px]">0.330</span>
      <label className="w-5">O:</label>
      <Spin label="不透明度" value="100" noPlus className="h-[45px] w-[73px] pl-2" />
      <span className="ml-[14px] h-6 w-[3px] bg-[#729fcf]" />
      <button className="ml-[6px]">图层 1</button>
      <button aria-label="可见" className="ml-[19px]">
        <Svg size={16}>
          <path d="M1 9Q8 2 15 9Q13 15 8 15T1 9Z" fill={INK} />
          <circle cx="8" cy="9.500" r="3.500" fill="#fdfdfb" />
          <circle cx="8" cy="9.500" r="2" fill={INK} />
          <path d="M2 4L4 7M8 1V5M14 4L12 7" stroke={INK} strokeWidth="1.500" />
        </Svg>
      </button>
      <button aria-label="解锁图层" className="ml-[22px]"><PadLock open /></button>
      <span className="mr-2 ml-[10px] h-8 w-px bg-[#dfdfdd]" />
      <span><b>Ctrl</b>:吸附渐变角度</span>
      <div className="mr-[10px] ml-auto h-[46px] w-px bg-[#dfdfdd]" />
      <div className="w-[84px] text-[17px] leading-[23px]">
        <div className="flex justify-between"><span>X:</span><span>99.75</span></div>
        <div className="flex justify-between"><span>Y:</span><span>125.63</span></div>
      </div>
      <span className="ml-[9px] w-[41px]">缩放:</span>
      <Spin label="缩放" value="105%" cell="w-[21px]" className="h-[45px] w-[111px] pl-[10px]" />
      <span className="ml-[10px] w-[41px]">旋转:</span>
      <Spin label="旋转" value="0.00°" cell="w-[21px]" className="h-[45px] w-[121px] pl-[18px]" />
      <span className="absolute right-[14px] bottom-[5px] text-sm text-[#8f8f8f]/80">CSDN @zzzzzz_bu</span>
    </footer>
  );
}

export default function App() {
  return (
    <div className="flex h-screen flex-col overflow-hidden bg-[#fdfdfb] font-['Open_Sans','Noto_Sans_CJK_SC',sans-serif] text-[18px] leading-6 text-[#282d2f]">
      <TitleBar />
      <nav className="flex h-[31px] shrink-0 items-center gap-[18px] border-b border-[#dfdfdd] pl-2">
        {MENUS.map(([name, key]) => (
          <button key={key}>{name}<Key>{key}</Key></button>
        ))}
      </nav>
      <GradientToolbar />
      <main className="flex min-h-0 flex-1">
        <div className="flex w-[43px] shrink-0 flex-col border-r border-[#8b7f74]">
          {TOOLS.map((tool) => (
            <div key={tool.name} className={tool.sep ? "border-t border-[#dfdfdd]" : ""}>
              <button
                aria-label={tool.name}
                className={`ml-px flex h-10 w-10 items-center justify-center rounded-md ${tool.active ? "border border-[#8b7f74] bg-[#dbd7d3]" : ""}`}
              >
                <Svg>{tool.icon}</Svg>
              </button>
            </div>
          ))}
        </div>
        <div className="flex min-w-0 flex-1 flex-col">
          <div className="flex h-[26px] shrink-0">
            <button aria-label="锁定参考线" className="mr-px ml-[2px] flex w-[17px] items-center justify-center rounded border border-[#8b7f74]"><PadLock /></button>
            <HRuler />
            <button aria-label="1:1" className="flex w-[18px] items-center justify-center rounded border border-[#8b7f74]">
              <svg width="16" height="18"><circle cx="7.500" cy="8" r="7.500" fill={INK} /><path d="M12 12L15 16" stroke={INK} strokeWidth="3" /><path d="M4 5V11M11 5V11M7.500 6V7.500M7.500 9V10.500" stroke="#fff" strokeWidth="1.500" /></svg>
            </button>
          </div>
          <div className="flex min-h-0 flex-1">
            <VRuler />
            <div className="flex min-w-0 flex-1 flex-col pb-px">
              <div className="flex min-h-0 flex-1">
                <Canvas />
                <div className="w-[18px] shrink-0 bg-[#cdcdcd] pt-[383px] pl-[5px]">
                  <div className="h-[375px] w-2 rounded-full bg-[#7d8282]" />
                </div>
              </div>
              <div className="flex h-[26px] shrink-0 bg-[#cdcdcd]">
                <div className="flex flex-1 items-center pl-[249px]">
                  <div className="h-2 w-6/7 rounded-full bg-[#7d8282]" />
                </div>
                <button aria-label="色彩管理" className="flex w-[18px] items-center justify-center rounded border border-[#8b7f74] bg-[#ececea]"><Circles /></button>
              </div>
            </div>
          </div>
        </div>
        <div className="flex w-3 shrink-0 flex-col items-center justify-center gap-[2px]">
          <span className="size-[3px] rounded-full bg-[#282d2f]" />
          <span className="size-[3px] rounded-full bg-[#282d2f]" />
          <span className="size-[3px] rounded-full bg-[#282d2f]" />
        </div>
        <FillPanel />
        <div className="flex w-[57px] shrink-0 flex-col pt-[2px] pr-1 pl-[9px]">
          {COMMANDS.map((group, i) => (
            <div key={i}>
              {i > 0 && <div className="flex h-[14px] items-center"><span className="h-px w-full bg-[#dfdfdd]" /></div>}
              {group.map((command) => (
                <button key={command.name} aria-label={command.name} className="flex h-[43px] w-full items-center justify-center">
                  <Svg>{command.icon}</Svg>
                </button>
              ))}
            </div>
          ))}
          <button aria-label="更多命令" className="mt-9 flex justify-center">
            <svg width="6" height="12"><path d="M0 0L6 6L0 12Z" fill={INK} /></svg>
          </button>
        </div>
      </main>
      <PaletteBar />
      <StatusBar />
    </div>
  );
}
